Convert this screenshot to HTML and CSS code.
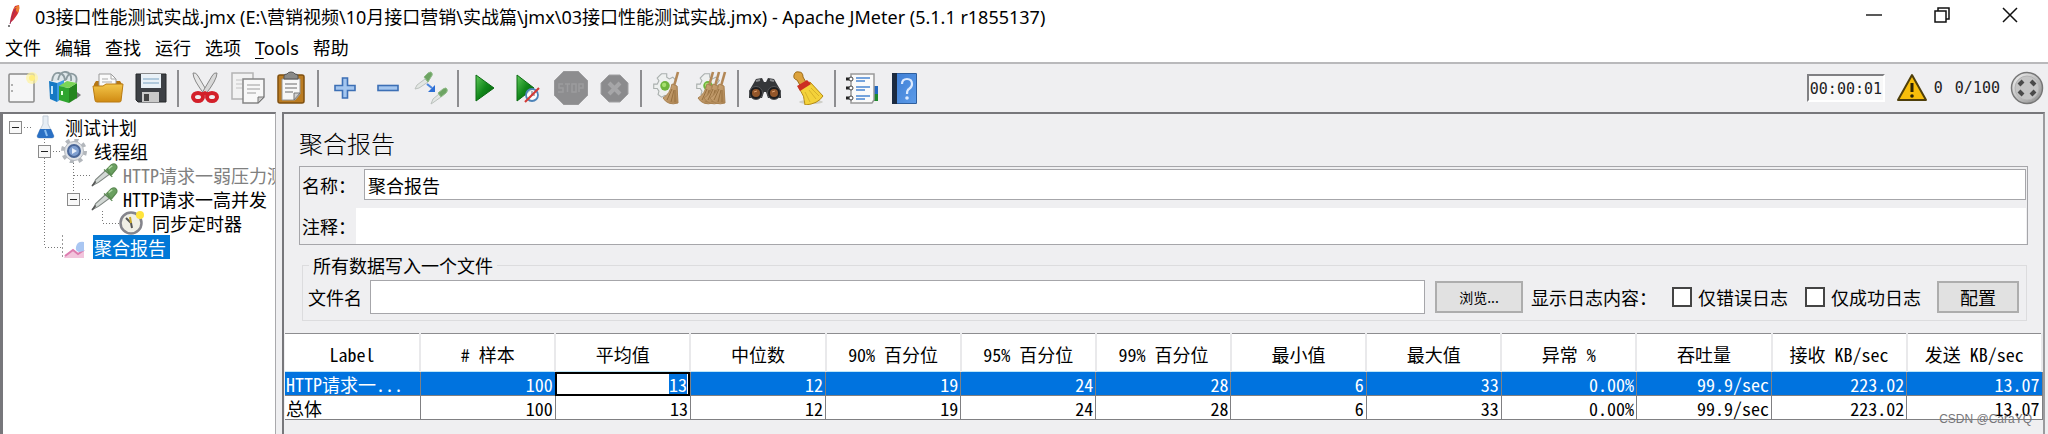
FILE: index.html
```html
<!DOCTYPE html>
<html lang="zh-CN">
<head>
<meta charset="utf-8">
<title>03接口性能测试实战.jmx - Apache JMeter (5.1.1 r1855137)</title>
<link rel="stylesheet" href="styles.css">
</head>
<body>
<svg class="defs" width="0" height="0" aria-hidden="true">
  <defs>
    <linearGradient id="gGreen" x1="0" y1="0" x2="1" y2="1"><stop offset="0" stop-color="#5fc95a"/><stop offset=".5" stop-color="#11871a"/><stop offset="1" stop-color="#045c0b"/></linearGradient>
    <linearGradient id="gGold" x1="0" y1="0" x2="0" y2="1"><stop offset="0" stop-color="#f3c64a"/><stop offset="1" stop-color="#d08a12"/></linearGradient>
    <linearGradient id="gBlue" x1="0" y1="0" x2="1" y2="1"><stop offset="0" stop-color="#3f7fd6"/><stop offset="1" stop-color="#5c9be8"/></linearGradient>
    <linearGradient id="gGrey" x1="0" y1="0" x2="1" y2="1"><stop offset="0" stop-color="#f4f4f4"/><stop offset="1" stop-color="#8c8c8c"/></linearGradient>
    <linearGradient id="gStraw" x1="0" y1="0" x2="1" y2="1"><stop offset="0" stop-color="#d6b183"/><stop offset="1" stop-color="#a9804e"/></linearGradient>
    <symbol id="dropper" viewBox="0 0 30 26">
      <path d="M3 24l3-6L17 8l4 4L9 21z" fill="#d3d8d5" stroke="#7f8682" stroke-width="1.2"/>
      <path d="M2 25l4-5" stroke="#555" stroke-width="1.6"/>
      <path d="M15 7l9 8M18 7l5-5q3-2 5 0t0 5l-5 6z" fill="#6aa060" stroke="#5b8a52" stroke-width="1.4"/>
      <path d="M20 6l4-3" stroke="#b6dba9" stroke-width="1.6"/>
    </symbol>
    <symbol id="gearwhite" viewBox="0 0 30 30">
      <path d="M11 2h6v4l3 2 4-2 4 4-3 4 1 3h3v6h-4l-2 3 2 3h-6l-4-2-4 2-4-3 1-4-2-3H2v-5h4l2-4-2-3 3-3z" fill="#eef0ef" stroke="#aab0ae" stroke-width="1.3"/>
      <circle cx="15" cy="16" r="5.500" fill="#6fb53c"/><circle cx="14" cy="15" r="2.500" fill="#a8e070"/>
    </symbol>
    <symbol id="straw" viewBox="0 0 20 34">
      <path d="M17 1L13 15" stroke="#b28756" stroke-width="2.600"/>
      <path d="M11 13l5 2 1 17q-10 3-15-5 7-4 9-14z" fill="url(#gStraw)" stroke="#a98252"/>
      <path d="M11 18L6 29M13 19l-3 12M14 19v12" stroke="#97703f" fill="none"/>
    </symbol>
  </defs>
</svg>

<header class="titlebar">
  <svg class="feather" width="12" height="24" viewBox="0 0 12 24"><path d="M2 19Q3 8 7 2l4-1q1 5-2 10T2 19z" fill="#d22d35"/><path d="M6 4l5-3q1 4-1 8z" fill="#ee7f2d"/><path d="M8 4Q4 11 2 20" stroke="#9c2d58" fill="none"/><circle cx="1" cy="22" r="1" fill="#555"/></svg>
  <h1 class="title">03接口性能测试实战.jmx (E:\营销视频\10月接口营销\实战篇\jmx\03接口性能测试实战.jmx) - Apache JMeter (5.1.1 r1855137)</h1>
  <div class="window-buttons">
    <button type="button" aria-label="最小化"><svg width="16" height="16" viewBox="0 0 16 16"><path d="M0 8h16" stroke="#222" stroke-width="1.500"/></svg></button>
    <button type="button" aria-label="还原"><svg width="16" height="16" viewBox="0 0 16 16" fill="none" stroke="#111" stroke-width="1.500"><path d="M1 4h11v11H1zM4 4V1h11v11h-3"/></svg></button>
    <button type="button" aria-label="关闭"><svg width="16" height="16" viewBox="0 0 16 16"><path d="M1 1l14 14M15 1L1 15" stroke="#111" stroke-width="1.500"/></svg></button>
  </div>
</header>

<nav class="menubar">
  <button type="button">文件</button><button type="button">编辑</button><button type="button">查找</button><button type="button">运行</button><button type="button">选项</button><button type="button"><u>T</u>ools</button><button type="button">帮助</button>
</nav>

<div class="toolbar" role="toolbar">
  <button type="button" aria-label="新建"><svg viewBox="0 0 34 34"><rect x="4" y="3" width="25" height="28" rx="1" fill="#f6f6f7" stroke="#8a8a8a" stroke-width="1.500"/><path d="M7 13v2M7 19v2" stroke="#999" stroke-width="1.500"/><circle cx="27" cy="7" r="6" fill="#fff3a0" opacity=".7"/><circle cx="27" cy="7" r="3" fill="#ffee80"/></svg></button>
  <button type="button" aria-label="模板"><svg viewBox="0 0 34 34"><path d="M28 28l5-4-4-3z" fill="#777"/><path d="M4 10Q5 1 11 2t6 8M10 9Q12 0 18 1t5 9M18 9q2-8 7-6t3 9" fill="#dfe7ea" stroke="#8b9a9e" stroke-width="1.800"/><path d="M1 10l8 2v19l-7-3z" fill="#1578c4"/><path d="M9 12l7-3v17l-7 5z" fill="#3e9be0"/><path d="M4 15v8" stroke="#bfe3fa" stroke-width="2"/><path d="M11 15l10 2v15l-10-3z" fill="#2fa52f"/><path d="M21 17l8-5v15l-8 5z" fill="#25851f"/><path d="M11 15l8-5 10 2-8 5z" fill="#7ad556"/><path d="M14 20v4" stroke="#e7ffe0" stroke-width="2"/></svg></button>
  <button type="button" aria-label="打开"><svg viewBox="0 0 34 34"><path d="M3 13l2-3h24l2 3v10H3z" fill="#b67714"/><path d="M8 18V3h12l5 5v10z" fill="#fafafa" stroke="#999"/><path d="M20 3v5h5M11 8h6M11 11h10" stroke="#aaa" fill="none"/><path d="M2 15h10l3-2h17l-2 17q0 1-2 1H6q-2 0-2-2z" fill="url(#gGold)" stroke="#b97b12"/></svg></button>
  <button type="button" aria-label="保存"><svg viewBox="0 0 34 34"><path d="M2 3h30v28H4l-2-2z" fill="#3d4045" stroke="#26282b"/><rect x="7" y="3" width="20" height="14" fill="#e9f1f7"/><path d="M9 8h16M9 12h16" stroke="#9dbcd3" stroke-width="1.500"/><rect x="8" y="21" width="17" height="10" fill="#c9c9c9"/><rect x="10" y="23" width="5" height="7" fill="#444"/></svg></button>
  <span class="sep"></span>
  <button type="button" aria-label="剪切"><svg viewBox="0 0 34 34"><path d="M5 2q3-1 5 3l10 17-3 2Q5 9 5 2z" fill="#e6e6e6" stroke="#888"/><path d="M29 2q-3-1-5 3L14 22l3 2Q29 9 29 2z" fill="#d8d8d8" stroke="#888"/><g fill="none" stroke="#d3202a" stroke-width="4"><ellipse cx="10" cy="26" rx="5" ry="4"/><ellipse cx="24" cy="26" rx="5" ry="4"/></g><path d="M13 22l4-2 4 2-4 3z" fill="#d3202a"/></svg></button>
  <button type="button" aria-label="复制"><svg viewBox="0 0 34 34"><path d="M1 2h21v26H1z" fill="#f2f2f2" stroke="#b4b4b4" stroke-width="1.500"/><path d="M5 9h6M5 13h6M5 17h6" stroke="#c4c4c4"/><path d="M12 8h21v18l-6 6H12z" fill="#f8f8f8" stroke="#858585" stroke-width="1.500"/><path d="M16 14h13M16 18h13M16 22h9" stroke="#bbb" stroke-width="1.500"/><path d="M33 26h-6v6z" fill="#ccc" stroke="#777"/></svg></button>
  <button type="button" aria-label="粘贴"><svg viewBox="0 0 34 34"><rect x="4" y="4" width="26" height="28" rx="2" fill="#bb7c22" stroke="#80500f" stroke-width="1.500"/><path d="M8 8h18v15l-5 6H8z" fill="#f7f7f7" stroke="#999"/><path d="M11 13h12M11 17h12M11 21h8" stroke="#999" stroke-width="1.300"/><path d="M26 22h-6v7z" fill="#d1d1d1" stroke="#777"/><path d="M10 8V5q0-2 3-2 1-2 4-2t4 2q3 0 3 2v3z" fill="#8a8a88" stroke="#555"/></svg></button>
  <span class="sep"></span>
  <button type="button" aria-label="展开"><svg viewBox="0 0 34 34"><path d="M14.500 7h5v7.500H27v5h-7.500V27h-5v-7.500H7v-5h7.500z" fill="#a4c6ef" stroke="#3c6fb5" stroke-width="1.600"/></svg></button>
  <button type="button" aria-label="折叠"><svg viewBox="0 0 34 34"><rect x="7" y="14.500" width="20" height="5" fill="#a4c6ef" stroke="#3c6fb5" stroke-width="1.600"/></svg></button>
  <button type="button" aria-label="切换"><svg viewBox="0 0 34 34"><g fill="#e2e6e3" stroke="#bcc2be"><path d="M1 18l2-4 8-6 3 3-9 6z"/><path d="M17 33l2-5 6-5 2 3-7 5z"/></g><g fill="#6da463" stroke="#8fba87"><path d="M10 6l4-4q3-2 4 0t-1 4l-3 5z"/><path d="M24 22l5-4q3-2 4 0t-1 4l-5 4z"/></g><path d="M13 13l5 4" stroke="#4a86e0" stroke-width="2.200"/><path d="M21 14v7h-7z" fill="#2d6fd6"/></svg></button>
  <span class="sep"></span>
  <button type="button" aria-label="启动"><svg viewBox="0 0 34 34"><path d="M8 4l18 13L8 30z" fill="url(#gGreen)" stroke="#0a6b12"/></svg></button>
  <button type="button" aria-label="不停顿启动"><svg viewBox="0 0 34 34"><path d="M6 4l17 13L6 30z" fill="url(#gGreen)" stroke="#0a6b12"/><circle cx="21" cy="24" r="6" fill="#fff" fill-opacity=".8" stroke="#4d83b8" stroke-width="1.800"/><path d="M21 20v4h3" fill="none" stroke="#667"/><path d="M14 31L28 17" stroke="#d23a36" stroke-width="2.200"/></svg></button>
  <button type="button" aria-label="停止" disabled><svg viewBox="0 0 34 34"><path d="M10 0h14l10 10v14L24 34H10L0 24V10z" fill="#8d8d8f" stroke="#a3a3a5"/><path d="M9 13H5v4h4v4H4M11 13h5M13.500 13v8M18 13h4v8h-4zM25 21v-8h4v4h-4" fill="none" stroke="#9c9c9e" stroke-width="1.500"/></svg></button>
  <button type="button" aria-label="关闭线程" disabled><svg viewBox="0 0 34 34"><path d="M12 4h11l8 8v11l-8 8H12l-8-8V12z" fill="#8b8b8d" stroke="#a0a0a2"/><path d="M12 12l11 11M23 12L12 23" stroke="#a6a6a8" stroke-width="4"/></svg></button>
  <span class="sep"></span>
  <button type="button" aria-label="清除"><svg viewBox="0 0 34 34"><use href="#gearwhite" x="0" y="1" width="28" height="26"/><use href="#straw" x="10" y="0" width="20" height="34"/></svg></button>
  <button type="button" aria-label="清除全部"><svg viewBox="0 0 34 34"><use href="#gearwhite" x="0" y="1" width="28" height="26"/><use href="#straw" x="2" y="0" width="20" height="34"/><use href="#straw" x="8" y="0" width="20" height="34"/><use href="#straw" x="14" y="0" width="20" height="34"/></svg></button>
  <span class="sep"></span>
  <button type="button" aria-label="搜索"><svg viewBox="0 0 34 34"><path d="M8 8l6-1 2 4h2l2-4 6 1 7 12v7H20l-2-6h-2l-2 6H1v-7z" fill="#35373a"/><path d="M8 10l4-1M22 9l4 1" stroke="#8b8d90" stroke-width="2"/><circle cx="8" cy="22" r="6.500" fill="#1d1d1f" stroke="#55575a"/><circle cx="26" cy="22" r="6.500" fill="#1d1d1f" stroke="#55575a"/><circle cx="8" cy="22" r="4" fill="#93562a"/><circle cx="26" cy="22" r="4" fill="#93562a"/><path d="M6 21l3-1M24 21l3-1" stroke="#e0a070"/></svg></button>
  <button type="button" aria-label="重置搜索"><svg viewBox="0 0 34 34"><ellipse cx="20" cy="31" rx="12" ry="2" fill="#cfcfc8"/><path d="M3 4q1-4 5-3 4 0 4 5l4 7-6 3-4-7Q2 8 3 4z" fill="#dca23c" stroke="#9c6a16"/><path d="M8 17l11-6 13 14q-5 8-18 9 0-9-6-17z" fill="#f4d23a" stroke="#b58b12"/><path d="M6 15l10-6 4 4-11 7z" fill="#cc2f22"/><path d="M14 21l5 10M18 19l7 9M20 17l8 8" stroke="#d8b22a" fill="none"/></svg></button>
  <span class="sep"></span>
  <button type="button" aria-label="函数助手"><svg viewBox="0 0 34 34"><rect x="28" y="15" width="5" height="8" fill="#2469c0"/><rect x="28" y="23" width="5" height="7" fill="#1d8a2c"/><path d="M6 3h23v26l-2 3H6z" fill="#fafafa" stroke="#9a9a9a" stroke-width="1.500"/><path d="M11 7h14M11 10h9M11 16h14M11 19h9M11 25h14M11 28h9" stroke="#4a86d2" stroke-width="1.600"/><path d="M1 8h5M1 17h5M1 27h5" stroke="#222" stroke-width="3"/><g fill="#fff" stroke="#444"><circle cx="6" cy="8" r="2"/><circle cx="6" cy="17" r="2"/><circle cx="6" cy="27" r="2"/></g></svg></button>
  <button type="button" aria-label="帮助"><svg viewBox="0 0 34 34"><rect x="4" y="2" width="25" height="31" rx="1" fill="#2e5f9f"/><rect x="4" y="2" width="5" height="31" fill="#1b2a40"/><rect x="9" y="3" width="19" height="29" fill="url(#gBlue)"/><path d="M14 13q0-5 5-5t5 5q0 3-3 5-2 1-2 5" fill="none" stroke="#dceaff" stroke-width="2.200"/><circle cx="19" cy="27" r="1.800" fill="#dceaff"/></svg></button>
  <div class="status">
    <output class="timer">00:00:01</output>
    <svg class="warn" width="32" height="30" viewBox="0 0 32 30"><path d="M16 2l14 25H2z" fill="#f7be0b" stroke="#4f3f0b" stroke-width="2" stroke-linejoin="round"/><path d="M16 10v9" stroke="#2b2304" stroke-width="3"/><circle cx="16" cy="23" r="1.800" fill="#2b2304"/></svg>
    <span class="errors">0</span>
    <span class="threads">0/100</span>
    <svg width="34" height="34" viewBox="0 0 34 34"><circle cx="17" cy="17" r="15.500" fill="url(#gGrey)" stroke="#777" stroke-width="1.500"/><circle cx="17" cy="17" r="12" fill="#c4c4c4" stroke="#b4b4b4"/><g stroke="#4a4a4a" stroke-width="4"><path d="M9 14l4-4M21 10l4 4M9 20l4 4M25 20l-4 4"/></g></svg>
  </div>
</div>

<div class="workspace">
  <aside class="tree-pane">
    <ul class="tree">
      <li><svg class="guide" viewBox="0 0 29 24"><path class="dots" d="M21 12.500h8"/><rect class="box" x="6.500" y="6.500" width="12" height="12"/><path class="minus" d="M9 12.500h7"/></svg><svg class="icon" viewBox="0 0 29 24"><path d="M11 1v8L5 21q0 2 2 2h13q2 0 2-2L16 9V1z" fill="#e7eef5" stroke="#c3cdd8"/><path d="M8 14h11l3 7q0 2-2 2H7q-2 0-2-2z" fill="#2a70c4"/><path d="M13 15l2 6" stroke="#8cc0f2" stroke-width="2"/></svg><span class="label">测试计划</span></li>
      <li><svg class="guide" viewBox="0 0 29 24"></svg><svg class="guide" viewBox="0 0 29 24"><path class="dots" d="M12.500 0v6M12.500 19v5M21 12.500h8"/><rect class="box" x="6.500" y="6.500" width="12" height="12"/><path class="minus" d="M9 12.500h7"/></svg><svg class="icon" viewBox="0 0 29 24"><circle cx="13" cy="12" r="11" fill="none" stroke="#b3b7bc" stroke-width="4" stroke-dasharray="4 4.640"/><circle cx="13" cy="12" r="9.500" fill="#dfe2e6" stroke="#b4b8be"/><circle cx="13" cy="12" r="6" fill="#7f9fd0" stroke="#4b6798" stroke-width="2"/><path d="M11 9l5 3-5 3z" fill="#e8f0fb"/></svg><span class="label">线程组</span></li>
      <li class="disabled"><svg class="guide" viewBox="0 0 29 24"></svg><svg class="guide" viewBox="0 0 29 24"><path class="dots" d="M12.500 0v24"/></svg><svg class="guide" viewBox="0 0 29 24"><path class="dots" d="M12.500 0v24M13 12.500h16"/></svg><svg class="icon"><use href="#dropper" width="28" height="24"/></svg><span class="label">HTTP请求一弱压力测试</span></li>
      <li><svg class="guide" viewBox="0 0 29 24"></svg><svg class="guide" viewBox="0 0 29 24"><path class="dots" d="M12.500 0v24"/></svg><svg class="guide" viewBox="0 0 29 24"><path class="dots" d="M12.500 0v6M21 12.500h8"/><rect class="box" x="6.500" y="6.500" width="12" height="12"/><path class="minus" d="M9 12.500h7"/></svg><svg class="icon"><use href="#dropper" width="28" height="24"/></svg><span class="label">HTTP请求一高并发</span></li>
      <li><svg class="guide" viewBox="0 0 29 24"></svg><svg class="guide" viewBox="0 0 29 24"><path class="dots" d="M12.500 0v24"/></svg><svg class="guide" viewBox="0 0 29 24"></svg><svg class="guide" viewBox="0 0 29 24"><path class="dots" d="M12.500 0v12M13 12.500h16"/></svg><svg class="icon" viewBox="0 0 29 24"><circle cx="12" cy="12" r="10.500" fill="#f0efe6" stroke="#85858c" stroke-width="2.500"/><path d="M7 7l5 5 1 5" fill="none" stroke="#555" stroke-width="2"/><path d="M12 12l-1-6" stroke="#c9a92a" stroke-width="2"/><circle cx="21" cy="4" r="4" fill="#ffe43c"/></svg><span class="label">同步定时器</span></li>
      <li class="selected"><svg class="guide" viewBox="0 0 29 24"></svg><svg class="guide" viewBox="0 0 29 24"><path class="dots" d="M12.500 0v12M13 12.500h16"/></svg><svg class="icon" viewBox="0 0 29 24"><path d="M1.500 0v23" stroke="#999" stroke-dasharray="2 2"/><path d="M3 23l1-3 8-6 5 4 6-3v8z" fill="#f2c4dc"/><path d="M4 21l8-6 5 4 6-4" fill="none" stroke="#dd7db0" stroke-width="2"/><path d="M15 12q1-6 8-5v9l-5 1q-4-1-3-5z" fill="#a9c6f2"/></svg><span class="label">聚合报告</span></li>
    </ul>
  </aside>

  <main class="main">
    <h2 class="heading">聚合报告</h2>
    <section class="ident">
      <div class="row name-row"><label for="name">名称：</label><input id="name" type="text" value="聚合报告"></div>
      <div class="row note-row"><label for="note">注释：</label><input id="note" type="text"></div>
    </section>
    <fieldset class="output">
      <legend>所有数据写入一个文件</legend>
      <div class="output-row">
        <label for="file">文件名</label>
        <input id="file" class="file" type="text">
        <button type="button" class="btn browse">浏览...</button>
        <span>显示日志内容：</span>
        <label class="check"><input type="checkbox">仅错误日志</label>
        <label class="check"><input type="checkbox">仅成功日志</label>
        <button type="button" class="btn config">配置</button>
      </div>
    </fieldset>
    <table class="report">
      <thead><tr><th>Label</th><th># 样本</th><th>平均值</th><th>中位数</th><th>90% 百分位</th><th>95% 百分位</th><th>99% 百分位</th><th>最小值</th><th>最大值</th><th>异常 %</th><th>吞吐量</th><th>接收 KB/sec</th><th>发送 KB/sec</th></tr></thead>
      <tbody>
        <tr class="active"><td>HTTP请求一...</td><td>100</td><td class="editing"><input type="text" value="13" aria-label="平均值"></td><td>12</td><td>19</td><td>24</td><td>28</td><td>6</td><td>33</td><td>0.00%</td><td>99.9/sec</td><td>223.02</td><td>13.07</td></tr>
        <tr><td>总体</td><td>100</td><td>13</td><td>12</td><td>19</td><td>24</td><td>28</td><td>6</td><td>33</td><td>0.00%</td><td>99.9/sec</td><td>223.02</td><td>13.07</td></tr>
      </tbody>
    </table>
  </main>
</div>
<div class="watermark">CSDN @CaraYQ</div>
</body>
</html>
```
FILE: styles.css
```css
* { box-sizing: border-box; }

body {
  margin: 0;
  min-height: 100vh;
  display: flex;
  flex-direction: column;
  background: #efeff1;
  color: #000;
  font: 18px/24px "Noto Sans Mono CJK SC", "Noto Sans CJK SC", sans-serif;
}

button, input { font: inherit; color: inherit; }
button { padding: 0; border: 0; background: none; }
.defs { position: absolute; }

.titlebar {
  height: 34px;
  display: flex;
  align-items: center;
  padding: 0 4px 0 8px;
  background: #fff;
}
.feather { margin: 0 15px 2px 0; }
.title {
  flex: 1;
  margin: 0;
  font: 18px/24px "Noto Sans", "Noto Sans CJK SC", sans-serif;
  white-space: nowrap;
}
.window-buttons { display: flex; align-self: flex-start; }
.window-buttons button { width: 68px; height: 30px; }
.window-buttons svg { display: block; margin: 0 auto; }

.menubar {
  height: 30px;
  display: flex;
  gap: 14px;
  padding-left: 5px;
  background: #fff;
  border-bottom: 2px solid #b9b9bb;
}
.menubar button { font: 18px/28px "Noto Sans", "Noto Sans CJK SC", sans-serif; }
.menubar u { text-underline-offset: 3px; }

.toolbar {
  height: 48px;
  display: flex;
  align-items: center;
  padding-right: 4px;
}
.toolbar > button { width: 43px; height: 40px; }
.toolbar > button svg { display: block; width: 34px; height: 34px; margin: 0 auto; }
.sep { width: 2px; height: 37px; margin: 0 4px 0 5px; background: #8d8d90; }
.status {
  display: flex;
  align-items: center;
  margin-left: auto;
  font: 15px/24px "DejaVu Sans Mono", monospace;
  color: #222;
}
.timer {
  width: 78px;
  height: 28px;
  padding: 1px;
  background: #f8f8f8;
  border: 2px solid #fff;
  border-color: #808083 #fff #fff #808083;
}
.warn { margin: 0 6px 0 11px; }
.errors { margin-right: 12px; }
.threads { margin-right: 10px; }

.workspace { flex: 1; display: flex; padding-right: 3px; gap: 6px; }

.tree-pane {
  width: 276px;
  flex: none;
  padding-top: 1px;
  overflow: hidden;
  background: #fff;
  border: 2px solid #77777b;
  border-left-width: 3px;
  border-right: 1px solid #a9a9ac;
  border-bottom: 0;
}
.tree { margin: 0; padding: 0; list-style: none; }
.tree li { display: flex; height: 24px; white-space: nowrap; }
.guide, .icon { flex: none; width: 29px; height: 24px; }
.icon { margin-right: 3px; }
.dots { fill: none; stroke: #777; stroke-dasharray: 1 2; }
.box { fill: #f8f8f8; stroke: #8a8a8a; }
.minus { stroke: #222; stroke-width: 1; }
.label { padding: 0 4px 0 1px; }
.disabled .label { color: #808080; }
.selected .label { background: #0078d7; color: #fff; }

.main {
  flex: 1;
  min-width: 0;
  padding: 14px 0 0 1px;
  border: 2px solid #77777b;
  border-right-color: #9b9b9e;
  border-bottom: 0;
}
.heading { margin: 0 14px 8px; font: 300 24px/30px "Noto Sans CJK SC", sans-serif; }

.ident { margin: 0 15px 0 14px; padding: 2px 1px 0 2px; border: 1px solid #a6a6aa; }
.row { display: flex; align-items: center; }
.row label { flex: none; }
.row input { flex: 1; min-width: 0; background: #fff; }
.name-row { margin-bottom: 8px; }
.name-row label { width: 62px; }
.name-row input { height: 31px; padding: 0 3px; border: 1px solid #a6a6aa; }
.note-row label { width: 54px; }
.note-row input { height: 36px; padding: 0 3px; border: 0; }

.output { margin: 9px 16px 12px 17px; padding: 4px 7px 6px 5px; border: 1px solid #dcdcde; }
.output legend { margin-left: 1px; padding: 0 4px; line-height: 22px; }
.output-row { display: flex; align-items: center; }
.file { flex: 1; min-width: 0; height: 34px; margin: 0 10px 0 8px; border: 1px solid #a6a6aa; background: #fff; }
.btn { height: 32px; border: 2px solid #adadad; background: #e1e1e1; }
.browse { width: 88px; margin-right: 8px; font: 14px/20px "Noto Sans CJK SC", sans-serif; }
.config { width: 82px; margin-left: 14px; }
.check { display: flex; align-items: center; gap: 6px; margin: 0 2px 0 15px; }
.check input {
  appearance: none;
  width: 20px;
  height: 20px;
  margin: 0;
  border: 2px solid #444;
  background: #fff;
}

.report { width: 100%; table-layout: fixed; border-collapse: collapse; border-top: 1px solid #8d8d90; background: #fff; line-height: 22px; }
.report th { height: 38px; padding: 2px 0 0; font-weight: 400; white-space: nowrap; border-right: 2px solid #e9e9eb; border-bottom: 1px solid #bfe6f7; }
.report td { height: 24px; padding: 0 2px 0 1px; text-align: right; white-space: nowrap; border-right: 1px solid #808083; border-bottom: 1px solid #808083; }
.report td:first-child { text-align: left; }
.active td { background: #0073df; color: #fff; }
.active .editing { background: #fff; outline: 2px solid #000; outline-offset: -2px; padding-right: 3px; }
.editing input { display: block; width: 18px; height: 20px; margin-left: auto; padding: 0; border: 0; background: #0073df; color: #fff; }

.watermark {
  position: absolute;
  right: 16px;
  bottom: 5px;
  font: 12px/20px "Liberation Sans", sans-serif;
  color: #77777a;
}
```
